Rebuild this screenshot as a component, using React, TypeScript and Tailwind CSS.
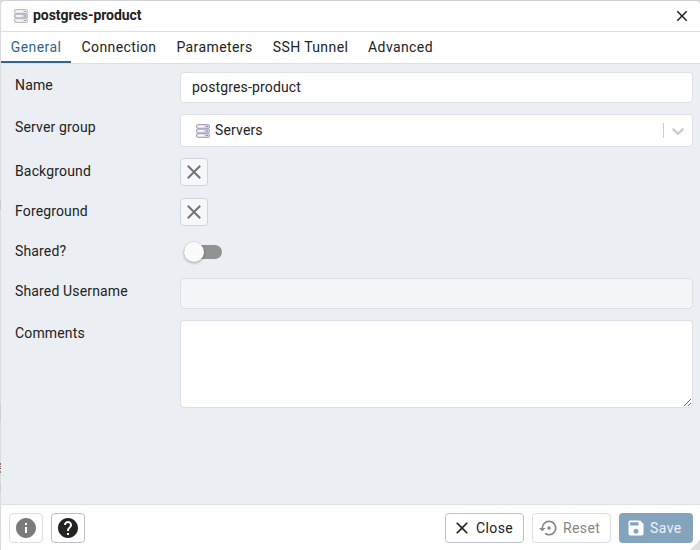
import React from 'react';
import { MdClose, MdHelp, MdInfo, MdSave, MdSettingsBackupRestore } from 'react-icons/md';

function ServerIcon({ muted = false }: { muted?: boolean }) {
  return (
    <svg viewBox="0 0 16 16" className="h-4 w-4 shrink-0" fill="none">
      {[1.5, 6, 10.5].map((y, i) => {
        const accent = !muted || i === 1;
        return (
          <g key={y}>
            <rect x="1.5" y={y} width="13" height="4" rx="1.3" fill={accent ? '#d3d0e0' : '#e6e6e6'} stroke={accent ? '#aca8c2' : '#bdbdbd'} />
            <path d={`M3 ${y + 2}h6`} stroke={accent ? '#fff' : '#f6f6f6'} strokeWidth="1.4" />
            <path d={`M11 ${y + 2}h2`} stroke={accent ? '#918cad' : '#aaa'} />
          </g>
        );
      })}
    </svg>
  );
}

function Row({ label, className, children }: { label: string; className: string; children: React.ReactNode }) {
  return (
    <div className={`flex items-start ${className}`}>
      <label className="w-[165px] shrink-0 pt-[3px] leading-5">{label}</label>
      {children}
    </div>
  );
}

function ColorButton() {
  return (
    <button className="flex h-7 w-7 items-center justify-center rounded-[4px] border border-[#d0d4de] bg-[#f6f7fa]">
      <svg viewBox="0 0 14 14" className="h-3.5 w-3.5" stroke="#747474" strokeWidth="2">
        <path d="M.8.8l12.4 12.4M13.2.8L.8 13.2" />
      </svg>
    </button>
  );
}

const tabs = [
  { name: 'General', width: 'w-[70px]' },
  { name: 'Connection', width: 'w-[96px]' },
  { name: 'Parameters', width: 'w-[95px]' },
  { name: 'SSH Tunnel', width: 'w-[97px]' },
  { name: 'Advanced', width: 'w-[83px]' },
];

export default function App() {
  return (
    <div className="flex h-[550px] w-[700px] overflow-hidden bg-[#d3d3d8] font-[Roboto,sans-serif] text-sm tracking-[0.15px] text-[#222]">
      <div className="flex w-px shrink-0 flex-col bg-[#dcdcde]">
        <span className="mt-[200px] h-[10px] bg-[#c8ccd2]" />
        <span className="mt-[194px] h-[18px] bg-[#cdd1d7]" />
        <span className="mt-[41px] h-[2px] bg-[#707078]" />
        <span className="mt-px h-px bg-[#a56a4c]" />
        <span className="mt-px h-px bg-[#555]" />
        <span className="mt-[2px] h-[2px] bg-[#8a8a92]" />
        <span className="mt-[10px] h-[9px] bg-[#cdd1d7]" />
      </div>
      <div className="relative mt-px flex h-[549px] flex-1 flex-col overflow-hidden rounded-t-[4px] bg-white">
        <header className="flex h-[31px] shrink-0 items-center border-b border-[#dde0e6] pl-3 pr-[9px]">
          <ServerIcon muted />
          <h1 className="ml-1 flex-1 pb-[3px] font-bold leading-5 tracking-[-0.06px]">postgres-product</h1>
          <MdClose className="h-[18px] w-[18px]" />
        </header>
        <nav className="flex h-8 shrink-0 border-b border-[#dde0e6]">
          {tabs.map((tab, i) => (
            <button
              key={tab.name}
              className={`${tab.width} border-b-2 text-center leading-5 tracking-[0.4px] ${i === 0 ? 'border-[#326690] text-[#326690]' : 'border-transparent'}`}
            >
              {tab.name}
            </button>
          ))}
        </nav>
        <main className="flex-1 bg-[#ebeef3] pl-[14px] pr-[7px] pt-2">
          <Row label="Name" className="h-[42px]">
            <input className="h-[31px] min-w-0 flex-1 rounded-[4px] border border-[#dde0e6] bg-white px-[11px] pb-[2px] tracking-[0.15px] outline-none" defaultValue="postgres-product" />
          </Row>
          <Row label="Server group" className="h-11">
            <div className="flex h-[33px] flex-1 items-center rounded-[4px] border border-[#dde0e6] bg-white pl-[14px] pr-1">
              <ServerIcon />
              <span className="ml-1 flex-1 pb-[2px]">Servers</span>
              <span className="h-[15px] w-px bg-[#ccc]" />
              <svg viewBox="0 0 20 20" className="ml-[4px] h-5 w-5" fill="#ccc">
                <path d="M4.516 7.548c0.436-0.446 1.043-0.481 1.576 0l3.908 3.747 3.908-3.747c0.533-0.481 1.141-0.446 1.574 0 0.436 0.445 0.408 1.197 0 1.615-0.406 0.418-4.695 4.502-4.695 4.502-0.217 0.223-0.502 0.335-0.787 0.335s-0.57-0.112-0.789-0.335c0 0-4.287-4.084-4.695-4.502s-0.436-1.17 0-1.615z" />
              </svg>
            </div>
          </Row>
          <Row label="Background" className="h-10"><ColorButton /></Row>
          <Row label="Foreground" className="h-10"><ColorButton /></Row>
          <Row label="Shared?" className="h-10">
            <div className="ml-1 mt-[7px] flex h-3.5 w-[38px] items-center rounded-full bg-[#929295]">
              <span className="h-5 w-5 rounded-full bg-[#fafafa] shadow-[0_1px_3px_rgba(0,0,0,0.35)]" />
            </div>
          </Row>
          <Row label="Shared Username" className="h-[42px]">
            <input disabled className="h-[31px] min-w-0 flex-1 rounded-[4px] border border-[#dde0e6] bg-[#f3f5f9]" />
          </Row>
          <Row label="Comments" className="h-[88px]">
            <textarea className="h-[88px] min-w-0 flex-1 resize rounded-[4px] border border-[#dde0e6] bg-white outline-none" />
          </Row>
        </main>
        <footer className="flex h-[46px] shrink-0 items-center border-t border-[#dde0e6] pl-2 pr-[7px] pt-px">
          <button className="flex h-[30px] w-[34px] items-center justify-center rounded-[4px] border border-[#dcdfe7]"><MdInfo className="h-6 w-6 text-[#7a7a7a]" /></button>
          <button className="ml-2 flex h-[30px] w-[34px] items-center justify-center rounded-[4px] border border-[#bac1cd]"><MdHelp className="h-6 w-6" /></button>
          <button className="ml-auto flex h-[30px] w-[79px] items-center rounded-[4px] border border-[#bac1cd] pl-[6px] tracking-[0.4px]">
            <MdClose className="mr-1 h-5 w-5" />Close
          </button>
          <button className="ml-2 flex h-[30px] w-[79px] items-center rounded-[4px] border border-[#dcdfe7] pl-[6px] tracking-[0.4px] text-[#868686]">
            <MdSettingsBackupRestore className="mr-1 h-5 w-5" />Reset
          </button>
          <button className="ml-2 flex h-[30px] w-[74px] items-center rounded-[4px] bg-[#84a3bc] pl-[7px] tracking-[0.4px] text-[#edf2f6]">
            <MdSave className="mr-1 h-5 w-5 text-white" />Save
          </button>
        </footer>
        <svg viewBox="0 0 10 10" className="absolute bottom-0 right-0 h-2.5 w-2.5"><path d="M10 0v10H0z" fill="#dedede" /></svg>
      </div>
    </div>
  );
}
